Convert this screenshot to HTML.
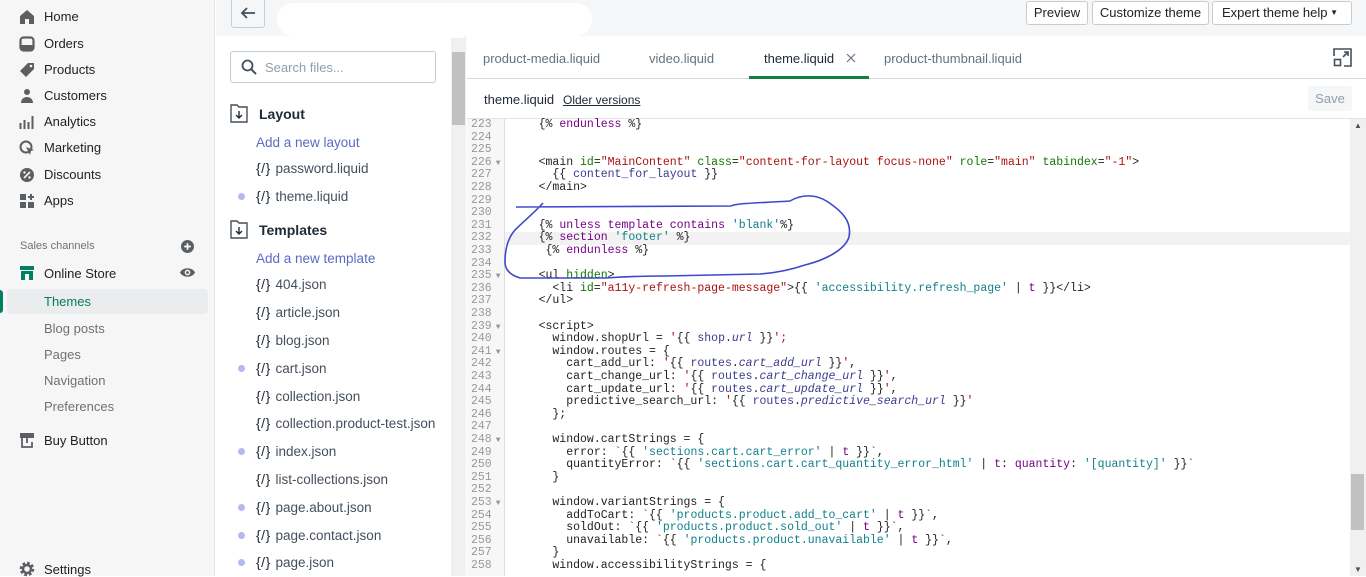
<!DOCTYPE html>
<html><head><meta charset="utf-8">
<style>
*{margin:0;padding:0;box-sizing:border-box}
body{width:1366px;height:576px;overflow:hidden;position:relative;font-family:"Liberation Sans",sans-serif;font-size:13px;color:#202223;background:#fff}
.a{position:absolute;white-space:nowrap}
#nav{left:0;top:0;width:215px;height:576px;background:#f6f6f7;border-right:1px solid #e1e3e5}
.ni{left:44px;font-size:13px;color:#202223}
.ic{left:19px;width:16px;height:16px}
.sub{left:44px;color:#6d7175}
#top{left:216px;top:0;width:1150px;height:36px;background:#f4f6f8}
.btn{top:1px;height:24px;border:1px solid #c9cccf;background:#fff;border-radius:3px;font-size:13px;line-height:22px;text-align:center;color:#202223}
#files{left:216px;top:36px;width:250px;height:540px;background:#fff;border-right:1px solid #dfe3e8}
.fi{left:256px;font-size:13.5px;color:#454f5b}
.fi b{font-weight:normal;color:#212b36;letter-spacing:0.5px;margin-right:1px;font-size:14px}
.dot{left:238px;width:7px;height:7px;border-radius:50%;background:#b4b9f2}
.lnk{left:256px;color:#5c6ac4;font-size:13.5px}
.code{font-family:"Liberation Mono",monospace;font-size:11.5px;line-height:12.6px}
.ln{position:absolute;left:471px;color:#999}
.ln i{font-style:normal;font-size:8px;margin-left:4px}
.cl{position:absolute;left:511px;color:#222;white-space:pre}
.t{color:#222}.at{color:#170}.s{color:#a11}.k{color:#708}.v{color:#3b3b8f}.ls{color:#11808a}.it{font-style:italic;color:#3b3b8f}
</style></head><body>
<div id="nav" class="a"></div>
<svg class="a ic" style="top:9px" viewBox="0 0 16 16"><path d="M8 1L1 7v8h5v-5h4v5h5V7z" fill="#5c5f62"/></svg>
<div class="a ni" style="top:9px">Home</div>
<svg class="a ic" style="top:36px" viewBox="0 0 16 16"><rect x="1.5" y="1.5" width="13" height="13" rx="3" fill="none" stroke="#5c5f62" stroke-width="2.2"/><rect x="2" y="9" width="12" height="5" fill="#5c5f62"/></svg>
<div class="a ni" style="top:36px">Orders</div>
<svg class="a ic" style="top:62px" viewBox="0 0 16 16"><path d="M9 1h6v6l-8 8-6-6z" fill="#5c5f62"/><circle cx="12" cy="4" r="1.3" fill="#f6f6f7"/></svg>
<div class="a ni" style="top:62px">Products</div>
<svg class="a ic" style="top:88px" viewBox="0 0 16 16"><circle cx="8" cy="4" r="3" fill="#5c5f62"/><path d="M2 15c0-4 3-6 6-6s6 2 6 6z" fill="#5c5f62"/></svg>
<div class="a ni" style="top:88px">Customers</div>
<svg class="a ic" style="top:114px" viewBox="0 0 16 16"><path d="M1.5 9v6M5.5 6v9M9.5 8v7M13.5 2v13" stroke="#5c5f62" stroke-width="2"/></svg>
<div class="a ni" style="top:114px">Analytics</div>
<svg class="a ic" style="top:140px" viewBox="0 0 16 16"><circle cx="7" cy="7" r="5.5" fill="none" stroke="#5c5f62" stroke-width="2"/><path d="M7 7l8 3-3 1-1 4z" fill="#5c5f62"/></svg>
<div class="a ni" style="top:140px">Marketing</div>
<svg class="a ic" style="top:167px" viewBox="0 0 16 16"><circle cx="8" cy="8" r="7" fill="#5c5f62"/><path d="M5 11l6-6" stroke="#f6f6f7" stroke-width="1.6"/><circle cx="5.5" cy="5.5" r="1.2" fill="#f6f6f7"/><circle cx="10.5" cy="10.5" r="1.2" fill="#f6f6f7"/></svg>
<div class="a ni" style="top:167px">Discounts</div>
<svg class="a ic" style="top:193px" viewBox="0 0 16 16"><rect x="1" y="1" width="6" height="6" fill="#5c5f62"/><rect x="1" y="9" width="6" height="6" fill="#5c5f62"/><rect x="9" y="9" width="6" height="6" fill="#5c5f62"/><path d="M12 1v6M9 4h6" stroke="#5c5f62" stroke-width="2"/></svg>
<div class="a ni" style="top:193px">Apps</div>
<div class="a" style="left:20px;top:240px;font-size:11px;color:#6d7175">Sales channels</div>
<svg class="a" style="left:181px;top:240px;width:13px;height:13px" viewBox="0 0 14 14"><circle cx="7" cy="7" r="7" fill="#5c5f62"/><path d="M7 3.5v7M3.5 7h7" stroke="#fff" stroke-width="1.8"/></svg>
<svg class="a ic" style="top:265px" viewBox="0 0 16 16"><rect x="1" y="1" width="14" height="4" fill="#008060"/><rect x="2" y="6" width="12" height="9" fill="#008060"/><rect x="6" y="9" width="4" height="6" fill="#f6f6f7"/></svg>
<div class="a ni" style="top:266px">Online Store</div>
<svg class="a" style="left:179px;top:266px;width:17px;height:13px" viewBox="0 0 18 12"><path d="M1 6c3-6 13-6 16 0-3 6-13 6-16 0z" fill="#5c5f62"/><circle cx="9" cy="6" r="3" fill="#f6f6f7"/><circle cx="9" cy="6" r="1.5" fill="#5c5f62"/></svg>
<div class="a" style="left:0;top:290px;width:3px;height:23px;background:#008060;border-radius:0 3px 3px 0"></div>
<div class="a" style="left:7px;top:289px;width:201px;height:25px;background:#ebecee;border-radius:4px"></div>
<div class="a ni" style="top:294px;color:#007f5f">Themes</div>
<div class="a sub" style="top:321px">Blog posts</div>
<div class="a sub" style="top:347px">Pages</div>
<div class="a sub" style="top:373px">Navigation</div>
<div class="a sub" style="top:399px">Preferences</div>
<svg class="a ic" style="top:432px" viewBox="0 0 16 16"><rect x="1" y="1" width="14" height="5" fill="#5c5f62"/><path d="M3 6v9h10V10M8 4v7" stroke="#5c5f62" stroke-width="1.8" fill="none"/></svg>
<div class="a ni" style="top:433px">Buy Button</div>
<svg class="a ic" style="top:561px" viewBox="0 0 16 16"><circle cx="8" cy="8" r="5.5" fill="none" stroke="#5c5f62" stroke-width="3.5" stroke-dasharray="2.5 1.8"/><circle cx="8" cy="8" r="4" fill="none" stroke="#5c5f62" stroke-width="2.5"/></svg>
<div class="a ni" style="top:562px">Settings</div>

<div id="top" class="a"></div>
<div class="a" style="left:231px;top:0;width:34px;height:28px;border:1px solid #c4cdd5;border-top:none;background:#f4f6f8;border-radius:0 0 3px 3px"></div>
<svg class="a" style="left:239px;top:5px;width:18px;height:16px" viewBox="0 0 18 16"><path d="M16 8H3M8 3L3 8l5 5" stroke="#454f5b" stroke-width="1.8" fill="none"/></svg>
<div class="a" style="left:277px;top:3px;width:315px;height:33px;background:#fff;border-radius:16px"></div>
<div class="a btn" style="left:1026px;width:62px">Preview</div>
<div class="a btn" style="left:1092px;width:117px">Customize theme</div>
<div class="a btn" style="left:1212px;width:140px;text-align:left;padding-left:9px">Expert theme help <span style="position:absolute;right:13px;top:0;font-size:8px">▼</span></div>

<div id="files" class="a"></div>
<div class="a" style="left:230px;top:51px;width:206px;height:32px;border:1px solid #c4cdd5;border-radius:3px"></div>
<svg class="a" style="left:241px;top:59px;width:16px;height:16px" viewBox="0 0 16 16"><circle cx="6.5" cy="6.5" r="5" fill="none" stroke="#454f5b" stroke-width="1.8"/><path d="M10 10l5 5" stroke="#454f5b" stroke-width="2"/></svg>
<div class="a" style="left:265px;top:60px;color:#919eab;font-size:13px">Search files...</div>
<svg class="a" style="left:230px;top:104px;width:18px;height:19px" viewBox="0 0 18 19"><path d="M1 1h6l2 2h8v15H1z" fill="none" stroke="#454f5b" stroke-width="1.4"/><path d="M9 7v7M6 11l3 3 3-3" stroke="#212b36" stroke-width="1.4" fill="none"/></svg>
<div class="a" style="left:259px;top:106px;font-size:14px;font-weight:bold;color:#212b36">Layout</div>
<div class="a lnk" style="top:135px">Add a new layout</div>
<div class="a fi" style="top:160px"><b>{/}</b> password.liquid</div>
<div class="a dot" style="top:193px"></div>
<div class="a fi" style="top:188px"><b>{/}</b> theme.liquid</div>
<svg class="a" style="left:230px;top:220px;width:18px;height:19px" viewBox="0 0 18 19"><path d="M1 1h6l2 2h8v15H1z" fill="none" stroke="#454f5b" stroke-width="1.4"/><path d="M9 7v7M6 11l3 3 3-3" stroke="#212b36" stroke-width="1.4" fill="none"/></svg>
<div class="a" style="left:259px;top:222px;font-size:14px;font-weight:bold;color:#212b36">Templates</div>
<div class="a lnk" style="top:251px">Add a new template</div>
<div class="a fi" style="top:276px"><b>{/}</b> 404.json</div>
<div class="a fi" style="top:304px"><b>{/}</b> article.json</div>
<div class="a fi" style="top:332px"><b>{/}</b> blog.json</div>
<div class="a dot" style="top:365px"></div>
<div class="a fi" style="top:360px"><b>{/}</b> cart.json</div>
<div class="a fi" style="top:388px"><b>{/}</b> collection.json</div>
<div class="a fi" style="top:415px"><b>{/}</b> collection.product-test.json</div>
<div class="a dot" style="top:448px"></div>
<div class="a fi" style="top:443px"><b>{/}</b> index.json</div>
<div class="a fi" style="top:471px"><b>{/}</b> list-collections.json</div>
<div class="a dot" style="top:504px"></div>
<div class="a fi" style="top:499px"><b>{/}</b> page.about.json</div>
<div class="a dot" style="top:532px"></div>
<div class="a fi" style="top:527px"><b>{/}</b> page.contact.json</div>
<div class="a dot" style="top:559px"></div>
<div class="a fi" style="top:554px"><b>{/}</b> page.json</div>
<div class="a" style="left:451px;top:38px;width:15px;height:538px;background:#f0f0f0"></div>
<div class="a" style="left:452px;top:52px;width:13px;height:73px;background:#c1c1c1"></div>

<div class="a" style="left:467px;top:78px;width:899px;height:1px;background:#d9d9d9"></div>
<div class="a" style="left:483px;top:51px;font-size:13px;color:#637381">product-media.liquid</div>
<div class="a" style="left:649px;top:51px;font-size:13px;color:#637381">video.liquid</div>
<div class="a" style="left:764px;top:51px;font-size:13px;color:#212b36">theme.liquid</div>
<svg class="a" style="left:846px;top:53px;width:10px;height:10px" viewBox="0 0 10 10"><path d="M1 1l8 8M9 1l-8 8" stroke="#637381" stroke-width="1.2"/></svg>
<div class="a" style="left:749px;top:76px;width:120px;height:3px;background:#108043"></div>
<div class="a" style="left:884px;top:51px;font-size:13px;color:#637381">product-thumbnail.liquid</div>
<svg class="a" style="left:1333px;top:48px;width:19px;height:19px" viewBox="0 0 19 19"><path d="M1 8V1h17v17h-7" stroke="#454f5b" stroke-width="1.6" fill="none"/><rect x="1.5" y="11.5" width="6" height="6" stroke="#454f5b" stroke-width="1.6" fill="none"/><path d="M10 9l5-5M11 4h4v4" stroke="#454f5b" stroke-width="1.6" fill="none"/></svg>
<div class="a" style="left:484px;top:92px;font-size:13px;color:#212b36">theme.liquid</div>
<div class="a" style="left:563px;top:93px;font-size:12px;color:#212b36;text-decoration:underline">Older versions</div>
<div class="a" style="left:1308px;top:86px;width:44px;height:25px;background:#f4f6f8;border-radius:3px;color:#919eab;font-size:13px;line-height:25px;text-align:center">Save</div>
<div class="a" style="left:467px;top:118px;width:899px;height:1px;background:#e4e4e4"></div>

<div class="a" style="left:467px;top:119px;width:38px;height:457px;background:#f7f7f7;border-right:1px solid #ddd"></div>
<div class="a" style="left:505px;top:232px;width:845px;height:13px;background:#f2f2f2"></div>
<div class="a code" style="left:0;top:119px;width:1350px;height:457px">
<div class="ln" style="top:0">223</div><div class="cl" style="top:0">    {% <span class="k">endunless</span> %}</div>
<div class="ln" style="top:12.6px">224</div>
<div class="ln" style="top:25.2px">225</div>
<div class="ln" style="top:37.8px">226<i>▼</i></div><div class="cl" style="top:37.8px">    <span class="t">&lt;main</span> <span class="at">id</span>=<span class="s">"MainContent"</span> <span class="at">class</span>=<span class="s">"content-for-layout focus-none"</span> <span class="at">role</span>=<span class="s">"main"</span> <span class="at">tabindex</span>=<span class="s">"-1"</span>&gt;</div>
<div class="ln" style="top:50.4px">227</div><div class="cl" style="top:50.4px">      {{ <span class="v">content_for_layout</span> }}</div>
<div class="ln" style="top:63px">228</div><div class="cl" style="top:63px">    &lt;/main&gt;</div>
<div class="ln" style="top:75.6px">229</div>
<div class="ln" style="top:88.2px">230</div>
<div class="ln" style="top:100.8px">231</div><div class="cl" style="top:100.8px">    {% <span class="k">unless</span> <span class="k">template</span> <span class="k">contains</span> <span class="ls">'blank'</span>%}</div>
<div class="ln" style="top:113.4px">232</div><div class="cl" style="top:113.4px">    {% <span class="k">section</span> <span class="ls">'footer'</span> %}</div>
<div class="ln" style="top:126px">233</div><div class="cl" style="top:126px">     {% <span class="k">endunless</span> %}</div>
<div class="ln" style="top:138.6px">234</div>
<div class="ln" style="top:151.2px">235<i>▼</i></div><div class="cl" style="top:151.2px">    &lt;ul <span class="at">hidden</span>&gt;</div>
<div class="ln" style="top:163.8px">236</div><div class="cl" style="top:163.8px">      &lt;li <span class="at">id</span>=<span class="s">"a11y-refresh-page-message"</span>&gt;{{ <span class="ls">'accessibility.refresh_page'</span> | <span class="k">t</span> }}&lt;/li&gt;</div>
<div class="ln" style="top:176.4px">237</div><div class="cl" style="top:176.4px">    &lt;/ul&gt;</div>
<div class="ln" style="top:189px">238</div>
<div class="ln" style="top:201.6px">239<i>▼</i></div><div class="cl" style="top:201.6px">    &lt;script&gt;</div>
<div class="ln" style="top:214.2px">240</div><div class="cl" style="top:214.2px">      window.shopUrl = <span class="s">'</span>{{ <span class="v">shop</span>.<span class="it">url</span> }}<span class="s">';</span></div>
<div class="ln" style="top:226.8px">241<i>▼</i></div><div class="cl" style="top:226.8px">      window.routes = {</div>
<div class="ln" style="top:239.4px">242</div><div class="cl" style="top:239.4px">        cart_add_url: <span class="s">'</span>{{ <span class="v">routes</span>.<span class="it">cart_add_url</span> }}<span class="s">'</span>,</div>
<div class="ln" style="top:252px">243</div><div class="cl" style="top:252px">        cart_change_url: <span class="s">'</span>{{ <span class="v">routes</span>.<span class="it">cart_change_url</span> }}<span class="s">'</span>,</div>
<div class="ln" style="top:264.6px">244</div><div class="cl" style="top:264.6px">        cart_update_url: <span class="s">'</span>{{ <span class="v">routes</span>.<span class="it">cart_update_url</span> }}<span class="s">'</span>,</div>
<div class="ln" style="top:277.2px">245</div><div class="cl" style="top:277.2px">        predictive_search_url: <span class="s">'</span>{{ <span class="v">routes</span>.<span class="it">predictive_search_url</span> }}<span class="s">'</span></div>
<div class="ln" style="top:289.8px">246</div><div class="cl" style="top:289.8px">      };</div>
<div class="ln" style="top:302.4px">247</div>
<div class="ln" style="top:315px">248<i>▼</i></div><div class="cl" style="top:315px">      window.cartStrings = {</div>
<div class="ln" style="top:327.6px">249</div><div class="cl" style="top:327.6px">        error: <span class="s">`</span>{{ <span class="ls">'sections.cart.cart_error'</span> | <span class="k">t</span> }}<span class="s">`</span>,</div>
<div class="ln" style="top:340.2px">250</div><div class="cl" style="top:340.2px">        quantityError: <span class="s">`</span>{{ <span class="ls">'sections.cart.cart_quantity_error_html'</span> | <span class="k">t</span>: <span class="k">quantity</span>: <span class="ls">'[quantity]'</span> }}<span class="s">`</span></div>
<div class="ln" style="top:352.8px">251</div><div class="cl" style="top:352.8px">      }</div>
<div class="ln" style="top:365.4px">252</div>
<div class="ln" style="top:378px">253<i>▼</i></div><div class="cl" style="top:378px">      window.variantStrings = {</div>
<div class="ln" style="top:390.6px">254</div><div class="cl" style="top:390.6px">        addToCart: <span class="s">`</span>{{ <span class="ls">'products.product.add_to_cart'</span> | <span class="k">t</span> }}<span class="s">`</span>,</div>
<div class="ln" style="top:403.2px">255</div><div class="cl" style="top:403.2px">        soldOut: <span class="s">`</span>{{ <span class="ls">'products.product.sold_out'</span> | <span class="k">t</span> }}<span class="s">`</span>,</div>
<div class="ln" style="top:415.8px">256</div><div class="cl" style="top:415.8px">        unavailable: <span class="s">`</span>{{ <span class="ls">'products.product.unavailable'</span> | <span class="k">t</span> }}<span class="s">`</span>,</div>
<div class="ln" style="top:428.4px">257</div><div class="cl" style="top:428.4px">      }</div>
<div class="ln" style="top:441px">258</div><div class="cl" style="top:441px">      window.accessibilityStrings = {</div>
</div>
<div class="a" style="left:1350px;top:119px;width:16px;height:457px;background:#f0f0f0"></div>
<div class="a" style="left:1351px;top:474px;width:13px;height:56px;background:#c1c1c1"></div>
<div class="a" style="left:1354px;top:121px;font-size:8px;color:#505050">▲</div>
<div class="a" style="left:1354px;top:565px;font-size:8px;color:#505050">▼</div>

<svg class="a" style="left:0;top:0;width:1366px;height:576px;pointer-events:none" viewBox="0 0 1366 576">
<path d="M516 207 L731 206 C736 203 760 203 790 201 C800 195 815 193 828 202 C843 212 852 222 849 237 C845 250 825 260 805 265 C790 270 775 273 760 274 L665 276 C640 276 620 277 605 278 L520 278 C510 275 505 270 505 262 C505 248 508 238 515 230 C525 220 535 212 543 203" fill="none" stroke="#3f48cc" stroke-width="1.6"/>
</svg>
</body></html>
